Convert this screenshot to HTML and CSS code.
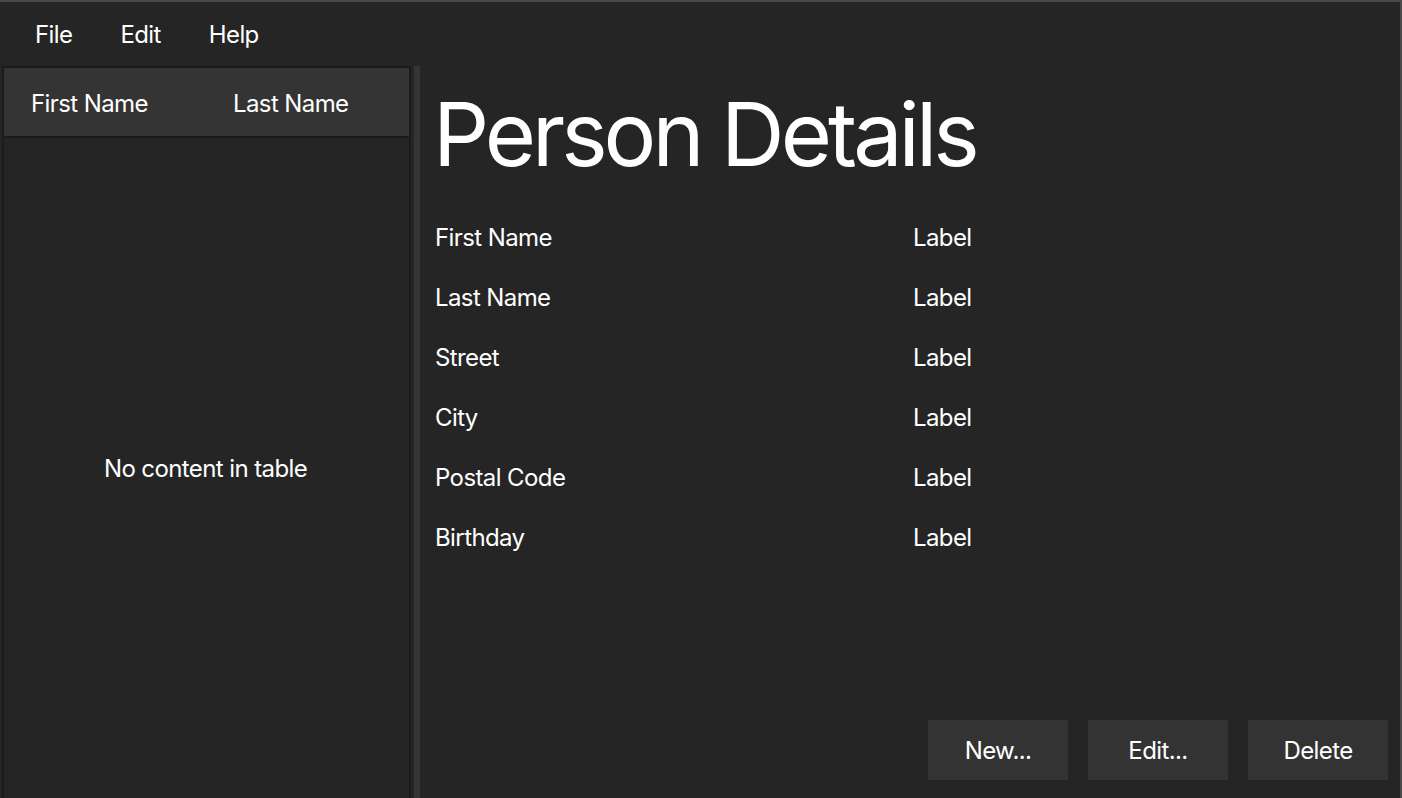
FILE: index.html
```html
<!DOCTYPE html>
<html>
<head>
<meta charset="utf-8">
<link rel="stylesheet" href="styles.css">
</head>
<body>
<div class="window">
  <nav class="menubar">
    <span class="menu-item">File</span>
    <span class="menu-item">Edit</span>
    <span class="menu-item">Help</span>
  </nav>
  <div class="main">
    <section class="table">
      <div class="table-header">
        <div class="col">First Name</div>
        <div class="col">Last Name</div>
      </div>
      <div class="table-body">No content in table</div>
    </section>
    <div class="gap"></div>
    <div class="splitter"></div>
    <section class="details">
      <h1 class="title">Person Details</h1>
      <div class="grid">
        <div class="key">First Name</div><div class="val">Label</div>
        <div class="key">Last Name</div><div class="val">Label</div>
        <div class="key">Street</div><div class="val">Label</div>
        <div class="key">City</div><div class="val">Label</div>
        <div class="key">Postal Code</div><div class="val">Label</div>
        <div class="key">Birthday</div><div class="val">Label</div>
      </div>
      <div class="spacer"></div>
      <div class="buttons">
        <button class="btn">New...</button>
        <button class="btn">Edit...</button>
        <button class="btn">Delete</button>
      </div>
    </section>
  </div>
</div>
</body>
</html>
```

FILE: styles.css
```css
html, body {
  margin: 0;
  padding: 0;
  height: 100%;
  background: #252525;
}
body {
  font-family: Inter, "Noto Sans", sans-serif;
  color: #ffffff;
  overflow: hidden;
  letter-spacing: -0.6px;
}
.window {
  box-sizing: border-box;
  height: 798px;
  width: 1402px;
  border-top: 2px solid #4a4a4a;
  border-right: 2px solid #4a4a4a;
  display: flex;
  flex-direction: column;
}
.menubar {
  height: 64px;
  display: flex;
  align-items: center;
  padding-left: 35px;
  font-size: 24px;
  flex: none;
}
.menu-item {
  margin-right: 48px;
  line-height: 1;
  position: relative;
  top: 1px;
}
.main {
  flex: 1;
  display: flex;
  min-height: 0;
}
.table {
  box-sizing: border-box;
  width: 409px;
  margin-left: 2px;
  border: 2px solid #1b1b1b;
  border-bottom: none;
  display: flex;
  flex-direction: column;
  flex: none;
}
.table-header {
  display: flex;
  height: 68px;
  background: #343434;
  border-bottom: 2px solid #1b1b1b;
  font-size: 24px;
  align-items: center;
  flex: none;
}
.col {
  width: 202px;
  padding-left: 27px;
  padding-top: 2px;
  box-sizing: border-box;
}
.table-body {
  flex: 1;
  display: flex;
  align-items: center;
  justify-content: center;
  font-size: 24px;
  padding-right: 2px;
}
.gap {
  width: 3px;
  flex: none;
}
.splitter {
  width: 6px;
  background: #353535;
  flex: none;
}
.details {
  flex: 1;
  display: flex;
  flex-direction: column;
  padding: 0 12px 18px 15px;
}
.title {
  margin: 20px 0 0 -2px;
  font-weight: 400;
  font-size: 88px;
  line-height: 96px;
  letter-spacing: -4px;
}
.grid {
  margin-top: 41px;
  display: grid;
  grid-template-columns: 478px 1fr;
  grid-auto-rows: 60px;
  font-size: 24px;
}
.key, .val {
  line-height: 30px;
}
.spacer {
  flex: 1;
}
.buttons {
  display: flex;
  justify-content: flex-end;
  gap: 20px;
}
.btn {
  width: 140px;
  height: 60px;
  background: #333333;
  border: none;
  color: #ffffff;
  font-family: Inter, "Noto Sans", sans-serif;
  font-size: 24px;
  letter-spacing: -0.6px;
  padding: 0;
}
```
